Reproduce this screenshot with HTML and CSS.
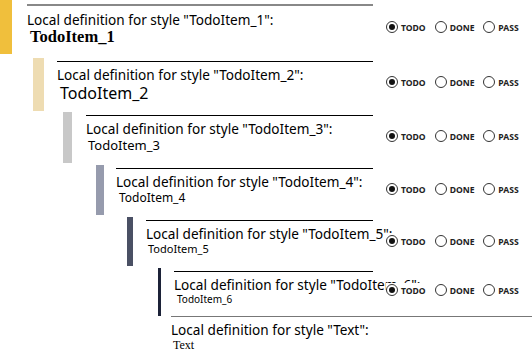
FILE: index.html
```html
<!DOCTYPE html>
<html lang="en">

<head>
    <meta charset="UTF-8">
    <title>Todo styles</title>
    <link rel="stylesheet" href="styles.css">
</head>

<body>
    <div class="item l1">
        <div class="bar"></div>
        <div class="body">
            <div class="title">Local definition for style "TodoItem_1":</div>
            <div class="name">TodoItem_1</div>
        </div>
        <div class="status">
            <span class="opt"><i class="radio on"></i>TODO</span>
            <span class="opt"><i class="radio"></i>DONE</span>
            <span class="opt"><i class="radio"></i>PASS</span>
        </div>
    </div>

    <div class="item l2">
        <div class="bar"></div>
        <div class="body">
            <div class="title">Local definition for style "TodoItem_2":</div>
            <div class="name">TodoItem_2</div>
        </div>
        <div class="status">
            <span class="opt"><i class="radio on"></i>TODO</span>
            <span class="opt"><i class="radio"></i>DONE</span>
            <span class="opt"><i class="radio"></i>PASS</span>
        </div>
    </div>

    <div class="item l3">
        <div class="bar"></div>
        <div class="body">
            <div class="title">Local definition for style "TodoItem_3":</div>
            <div class="name">TodoItem_3</div>
        </div>
        <div class="status">
            <span class="opt"><i class="radio on"></i>TODO</span>
            <span class="opt"><i class="radio"></i>DONE</span>
            <span class="opt"><i class="radio"></i>PASS</span>
        </div>
    </div>

    <div class="item l4">
        <div class="bar"></div>
        <div class="body">
            <div class="title">Local definition for style "TodoItem_4":</div>
            <div class="name">TodoItem_4</div>
        </div>
        <div class="status">
            <span class="opt"><i class="radio on"></i>TODO</span>
            <span class="opt"><i class="radio"></i>DONE</span>
            <span class="opt"><i class="radio"></i>PASS</span>
        </div>
    </div>

    <div class="item l5">
        <div class="bar"></div>
        <div class="body">
            <div class="title">Local definition for style "TodoItem_5":</div>
            <div class="name">TodoItem_5</div>
        </div>
        <div class="status">
            <span class="opt"><i class="radio on"></i>TODO</span>
            <span class="opt"><i class="radio"></i>DONE</span>
            <span class="opt"><i class="radio"></i>PASS</span>
        </div>
    </div>

    <div class="item l6">
        <div class="bar"></div>
        <div class="body">
            <div class="title">Local definition for style "TodoItem_6":</div>
            <div class="name">TodoItem_6</div>
        </div>
        <div class="status">
            <span class="opt"><i class="radio on"></i>TODO</span>
            <span class="opt"><i class="radio"></i>DONE</span>
            <span class="opt"><i class="radio"></i>PASS</span>
        </div>
    </div>

    <div class="text-item">
        <div class="title">Local definition for style "Text":</div>
        <div class="name">Text</div>
    </div>
</body>

</html>
```

FILE: styles.css
```css
* {
    margin: 0;
    padding: 0;
    box-sizing: border-box;
}

body {
    width: 532px;
    height: 355px;
    overflow: hidden;
    background: #fff;
    color: #000;
    font-family: "Noto Sans", "Open Sans", sans-serif;
}

.item {
    display: flex;
    align-items: stretch;
}

.item .bar {
    flex: none;
}

.item .body {
    flex: none;
    width: 0;
    padding-top: 3px;
}

.title {
    border-top: 1px solid #000;
    font-size: 13.6px;
    line-height: 17px;
    padding-top: 4px;
    white-space: nowrap;
}

.name {
    white-space: nowrap;
}

.status {
    flex: none;
    align-self: flex-start;
    display: flex;
    background: #fff;
    margin-left: auto;
    width: 146px;
    margin-top: 17px;
    height: 13px;
}

.opt {
    display: flex;
    align-items: flex-end;
    font-family: "Noto Sans", sans-serif;
    font-weight: 700;
    font-size: 8.6px;
    line-height: 9px;
    color: #222;
    width: 50px;
}

.radio {
    width: 12px;
    height: 12px;
    border: 1px solid #333;
    border-radius: 50%;
    margin-right: 3px;
    display: flex;
    align-items: center;
    justify-content: center;
}

.radio.on::after {
    content: "";
    width: 6px;
    height: 6px;
    border-radius: 50%;
    background: #111;
}

/* levels */
.l1 { height: 54px; margin-bottom: 4px; }
.l1 .bar { width: 12px; background: #f0bf3c; }
.l1 .body { margin-left: 15px; width: 346px; padding-top: 4px; }
.l1 .title { border-top: 2px solid #888; padding-top: 5px; }
.l1 .name { font-family: "Liberation Serif", serif; font-weight: 700; font-size: 16.5px; line-height: 18px; padding-left: 3px; }
.l1 .status { margin-top: 20px; }

.l2 { height: 53px; margin-left: 33px; margin-bottom: 1px; }
.l2 .bar { width: 11px; background: #eedcb2; }
.l2 .body { margin-left: 13px; width: 316px; }
.l2 .name { font-size: 16px; line-height: 20px; padding-left: 3px; }

.l3 { height: 51px; margin-left: 63px; margin-bottom: 2px; }
.l3 .bar { width: 9px; background: #c8c8c8; }
.l3 .body { margin-left: 14px; width: 287px; }
.l3 .name { font-size: 13px; line-height: 16px; padding-left: 2px; }

.l4 { height: 50px; margin-left: 96px; margin-bottom: 2px; }
.l4 .bar { width: 8px; background: #969bad; }
.l4 .body { margin-left: 12px; width: 257px; }
.l4 .name { font-size: 12px; line-height: 15px; padding-left: 3px; }

.l5 { height: 49px; margin-left: 127px; margin-bottom: 2px; }
.l5 .bar { width: 6px; background: #4a5064; }
.l5 .body { margin-left: 13px; width: 227px; }
.l5 .name { font-size: 11px; line-height: 14px; padding-left: 2px; }

.l6 { height: 48px; margin-left: 158px; }
.l6 .bar { width: 3px; background: #1c2238; }
.l6 .body { margin-left: 13px; width: 199px; }
.l6 .name { font-size: 10px; line-height: 13px; padding-left: 3px; }
.l6 .status { margin-top: 15px; }

.text-item {
    margin-left: 171px;
}

.text-item .title {
    border-top: 1px solid #777;
    padding-top: 4px;
}

.text-item .name {
    font-family: "Liberation Serif", serif;
    font-size: 12px;
    line-height: 14px;
    padding-left: 2px;
}
```
